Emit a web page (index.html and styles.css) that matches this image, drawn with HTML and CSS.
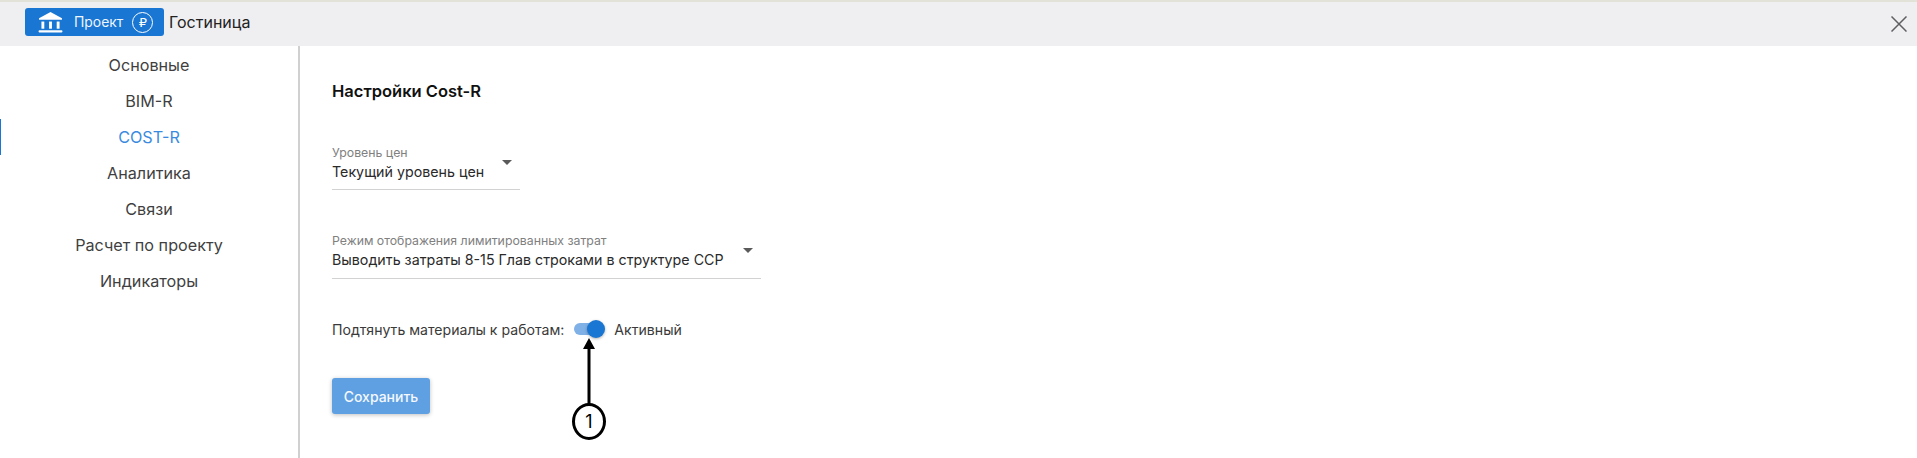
FILE: index.html
```html
<!DOCTYPE html>
<html lang="ru">
<head>
<meta charset="utf-8">
<title>Настройки Cost-R</title>
<link rel="stylesheet" href="styles.css">
</head>
<body>
<div class="app">
  <header class="topbar">
    <div class="project-chip">
      <svg class="bank-icon" viewBox="0 0 26 22" width="25" height="21"><path d="M13 0 L25 6.5 V8 H1 V6.5 Z" fill="#fff"/><rect x="3.5" y="10" width="3" height="7.5" fill="#fff"/><rect x="11.5" y="10" width="3" height="7.5" fill="#fff"/><rect x="19.5" y="10" width="3" height="7.5" fill="#fff"/><rect x="0.5" y="19" width="25" height="2.5" rx="1" fill="#fff"/></svg>
      <span class="chip-label">Проект</span>
      <span class="ruble">₽</span>
    </div>
    <span class="project-name">Гостиница</span>
    <svg class="close-icon" viewBox="0 0 16 16" width="16" height="16"><path d="M0.5 0.5 L15.5 15.5 M15.5 0.5 L0.5 15.5" stroke="#5f5f63" stroke-width="1.5" fill="none"/></svg>
  </header>
  <div class="body">
    <nav class="sidebar">
      <a class="nav-item">Основные</a>
      <a class="nav-item">BIM-R</a>
      <a class="nav-item active">COST-R</a>
      <a class="nav-item">Аналитика</a>
      <a class="nav-item">Связи</a>
      <a class="nav-item">Расчет по проекту</a>
      <a class="nav-item">Индикаторы</a>
    </nav>
    <main class="content">
      <h1 class="title">Настройки Cost-R</h1>
      <div class="select select-short">
        <div class="select-label">Уровень цен</div>
        <div class="select-value">Текущий уровень цен</div>
        <span class="caret"></span>
      </div>
      <div class="select select-long">
        <div class="select-label">Режим отображения лимитированных затрат</div>
        <div class="select-value">Выводить затраты 8-15 Глав строками в структуре ССР</div>
        <span class="caret"></span>
      </div>
      <div class="toggle-row">
        <span>Подтянуть материалы к работам:</span>
        <span class="switch"><span class="switch-track"></span><span class="switch-thumb"></span></span>
        <span>Активный</span>
      </div>
      <button class="save-btn">Сохранить</button>
    </main>
  </div>
  <div class="callout">
    <svg class="callout-arrow" viewBox="0 0 12 66" width="12" height="66"><path d="M6 0 L12 11 H7.5 V66 H4.5 V11 H0 Z" fill="#000"/></svg>
    <span class="callout-badge">1</span>
  </div>
</div>
</body>
</html>
```
FILE: styles.css
```css
* { box-sizing: border-box; }
html, body { margin: 0; height: 100%; background: #fff; overflow: hidden; }
body { font-family: Inter, "Noto Sans", sans-serif; color: #333; }
.app { position: relative; height: 458px; border-top: 2px solid #e2e2d8; display: flex; flex-direction: column; }
.topbar { height: 44px; background: #efeff2; display: flex; align-items: center; padding-left: 25px; padding-right: 10px; flex: none; }
.project-chip { width: 139px; height: 28px; background: #1976d2; border-radius: 3px; display: flex; align-items: center; padding-left: 13px; color: #fff; margin-top: -4px; }
.bank-icon { flex: none; }
.chip-label { font-size: 13.9px; margin-left: 11px; color: #eef5fd; }
.ruble { width: 21px; height: 21px; border: 1.5px solid #fff; border-radius: 50%; margin-left: 9px; display: flex; align-items: center; justify-content: center; font-size: 13px; font-weight: 400; font-family: "DejaVu Sans", sans-serif; }
.project-name { font-size: 16px; color: #222; margin-left: 5px; margin-top: -4px; }
.close-icon { margin-left: auto; }
.body { flex: 1; display: flex; min-height: 0; }
.sidebar { width: 300px; flex: none; border-right: 2px solid #d0d0d0; display: flex; flex-direction: column; padding-top: 1px; }
.nav-item { height: 36px; display: flex; align-items: center; justify-content: center; font-size: 16.2px; color: #3f3f3f; }
.nav-item.active { color: #3a8be0; box-shadow: inset 1px 0 0 #1976d2; }
.content { flex: 1; padding: 35px 0 0 32px; display: flex; flex-direction: column; align-items: flex-start; }
.title { margin: 0; font-size: 16.5px; line-height: 20px; font-weight: 600; color: #111; }
.select { position: relative; border-bottom: 1px solid #d2d2d2; }
.select-short { width: 188px; height: 44px; margin-top: 45px; }
.select-long { width: 429px; height: 45px; margin-top: 44px; }
.select-label { font-size: 12.3px; line-height: 14px; color: #808080; }
.select-value { font-size: 14.25px; line-height: 18px; color: #2a2a2a; margin-top: 3px; white-space: nowrap; }
.caret { position: absolute; right: 8px; top: 14px; width: 0; height: 0; border-left: 5px solid transparent; border-right: 5px solid transparent; border-top: 5px solid #5a5a5a; }
.toggle-row { display: flex; align-items: center; margin-top: 39px; font-size: 14.1px; color: #3a3a3a; height: 22px; }
.switch { position: relative; width: 31px; height: 18px; margin: 0 9px 0 10px; display: block; }
.switch-track { position: absolute; left: 0; top: 3px; width: 30px; height: 12px; border-radius: 6px; background: #7fb0e6; }
.switch-thumb { position: absolute; right: 0; top: 0; width: 18px; height: 18px; border-radius: 50%; background: #1976d2; box-shadow: 0 1px 3px rgba(0,0,0,.3); }
.save-btn { margin-top: 38px; width: 98px; height: 36px; background: #5fa0e2; color: #f4f8fd; border: 0; border-radius: 3px; font: 500 14px Inter, sans-serif; box-shadow: 0 1px 4px rgba(0,0,0,.25); padding: 0; }
.callout { position: absolute; left: 571px; top: 336px; width: 36px; display: flex; flex-direction: column; align-items: center; }
.callout-arrow { display: block; }
.callout-badge { width: 34px; height: 37px; margin-top: -1px; border: 3px solid #000; border-radius: 50%; background: #fff; display: flex; align-items: center; justify-content: center; font-size: 18px; color: #000; }
```
